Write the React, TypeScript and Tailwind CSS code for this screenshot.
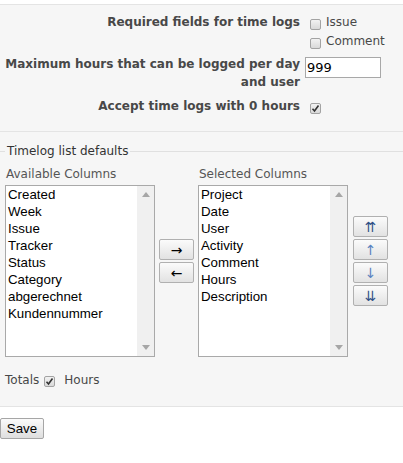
import React from 'react'

const labelFont = { fontFamily: '"DejaVu Sans", Verdana, sans-serif' }
const arial = { fontFamily: '"Liberation Sans", Arial, sans-serif' }

function Check({ checked = false }: { checked?: boolean }) {
  return (
    <span className="flex w-[11px] h-[11px] shrink-0 items-center justify-center rounded-[2px] border border-[#a3a3a3] bg-gradient-to-b from-[#f2f2f2] to-[#d9d9d9]">
      {checked && (
        <svg width="9" height="9" viewBox="0 0 9 9">
          <path d="M1.5 4.8 L3.5 7 L7.5 1.5" fill="none" stroke="#333" strokeWidth="1.6" />
        </svg>
      )}
    </span>
  )
}

function Btn({ children, className = '' }: { children: React.ReactNode; className?: string }) {
  return (
    <button
      type="button"
      className={
        'flex h-[21px] w-[35px] items-center justify-center rounded-[2px] border border-[#b0b0b0] bg-gradient-to-b from-[#fbfbfb] to-[#e2e2e2] leading-none ' +
        className
      }
      style={labelFont}
    >
      {children}
    </button>
  )
}

function ListBox({ items }: { items: string[] }) {
  return (
    <div className="flex h-[172px] w-[150px] border border-[#a9a9a9] bg-white">
      <div className="flex-1 pl-[2px] text-[13.3px] leading-[17px] text-black" style={arial}>
        {items.map((it) => (
          <div key={it}>{it}</div>
        ))}
      </div>
      <div className="flex w-[17px] flex-col items-center justify-between bg-[#f0f0f0] py-[6px]">
        <svg width="8" height="5" viewBox="0 0 8 5">
          <path d="M0 5 L4 0 L8 5 Z" fill="#a6a6a6" />
        </svg>
        <svg width="8" height="5" viewBox="0 0 8 5">
          <path d="M0 0 L4 5 L8 0 Z" fill="#a6a6a6" />
        </svg>
      </div>
    </div>
  )
}

export default function App() {
  return (
    <div className="w-[403px] h-[463px] bg-white pt-[4px] text-[12px] text-[#484848]" style={labelFont}>
      <div className="border-y border-[#e4e4e4] bg-[#f6f6f6]">
        {/* general settings */}
        <div className="pt-[8px] pb-[16px]">
          <div className="flex h-[38px]">
            <div className="w-[300px] shrink-0 text-right font-bold leading-[19px]">Required fields for time logs</div>
            <div className="pl-[10px] leading-[19px]">
              <div className="flex h-[19px] items-center gap-[5px]">
                <span className="flex pt-[3px]"><Check /></span>
                <span>Issue</span>
              </div>
              <div className="flex h-[19px] items-center gap-[5px]">
                <span className="flex pt-[3px]"><Check /></span>
                <span>Comment</span>
              </div>
            </div>
          </div>
          <div className="mt-[4px] flex h-[36px]">
            <div className="w-[300px] shrink-0 text-right font-bold leading-[18px]">
              Maximum hours that can be logged per day
              <br />
              and user
            </div>
            <div className="pl-[5px] pt-[2px]">
              <input
                defaultValue="999"
                className="block h-[21px] w-[76px] border border-[#a8a8a8] bg-white px-[1px] text-[13px] text-black outline-none"
                style={labelFont}
              />
            </div>
          </div>
          <div className="mt-[6px] flex h-[18px]">
            <div className="w-[300px] shrink-0 text-right font-bold leading-[18px]">Accept time logs with 0 hours</div>
            <div className="flex h-[18px] items-center pl-[10px]">
              <span className="flex pt-[5px]"><Check checked /></span>
            </div>
          </div>
        </div>

        {/* timelog list defaults */}
        <div className="border-t border-[#e4e4e4] pt-[11px] pb-[17px]">
          <div className="flex h-[16px] items-center leading-[16px] text-[#333]">
            <div className="h-px w-[5px] bg-[#e0e0e0]" />
            <span className="px-[2px]">Timelog list defaults</span>
            <div className="h-px flex-1 bg-[#e0e0e0]" />
          </div>
          <div className="mt-[6px] flex items-center gap-[4px] pl-[5px]">
            <div>
              <div className="h-[18px] pl-[1px] leading-[18px] text-[#555]">Available Columns</div>
              <div className="mt-[2px]">
                <ListBox items={['Created', 'Week', 'Issue', 'Tracker', 'Status', 'Category', 'abgerechnet', 'Kundennummer']} />
              </div>
            </div>
            <div className="flex flex-col gap-[2px] text-[14px] text-black">
              <Btn>→</Btn>
              <Btn>←</Btn>
            </div>
            <div>
              <div className="h-[18px] pl-[1px] leading-[18px] text-[#555]">Selected Columns</div>
              <div className="mt-[2px]">
                <ListBox items={['Project', 'Date', 'User', 'Activity', 'Comment', 'Hours', 'Description']} />
              </div>
            </div>
            <div className="ml-[1px] flex flex-col gap-[2px] text-[14px]">
              <Btn className="text-[#2f4f86]">⇈</Btn>
              <Btn className="text-[#5b83c0]">↑</Btn>
              <Btn className="text-[#5b83c0]">↓</Btn>
              <Btn className="text-[#2f4f86]">⇊</Btn>
            </div>
          </div>
          <div className="mt-[14px] flex h-[18px] items-center pl-[5px] leading-[18px]">
            <span>Totals</span>
            <span className="ml-[5px] flex pt-[3px]"><Check checked /></span>
            <span className="ml-[9px]">Hours</span>
          </div>
        </div>
      </div>
      <div className="pt-[11px]">
        <button
          type="button"
          className="block h-[21px] w-[44px] rounded-[2px] border border-[#a6a6a6] bg-gradient-to-b from-[#fbfbfb] to-[#dedede] text-[13.3px] text-black"
          style={arial}
        >
          Save
        </button>
      </div>
    </div>
  )
}
